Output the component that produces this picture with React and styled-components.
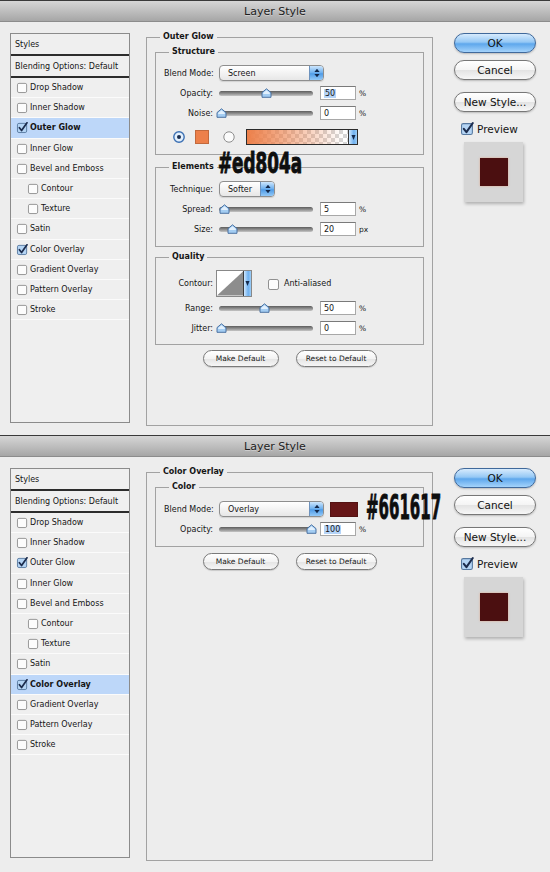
import React from "react";
import styled, { createGlobalStyle } from "styled-components";

const GlobalStyle = createGlobalStyle`
  html, body {
    margin: 0;
    padding: 0;
    background: #ececec;
  }
  body {
    font-family: "DejaVu Sans", Verdana, sans-serif;
    font-size: 8px;
    color: #151515;
  }
`;

const Page = styled.div`
  width: 550px;
  height: 872px;
  overflow: hidden;
`;

const Dialog = styled.section`
  position: relative;
  height: ${(p) => p.$height}px;
  background: #ededed;
`;

const TitleBar = styled.header`
  height: 20px;
  border-top: 1px solid #3a3a3a;
  border-bottom: 1px solid #8c8c8c;
  background: linear-gradient(#d6d6d6, #bcbcbc 55%, #a6a6a6);
  display: flex;
  align-items: center;
  justify-content: center;
  font-size: 11px;
  color: #1d1d1d;
  text-shadow: 0 1px 0 rgba(255, 255, 255, 0.35);
`;

const Body = styled.div`
  display: flex;
  align-items: flex-start;
  padding: 9px 0 0 10px;
`;

/* ---------- left style list ---------- */

const StyleList = styled.div`
  width: 120px;
  height: 390px;
  margin-top: 2px;
  box-sizing: border-box;
  border: 1px solid #8b8b8b;
  background: #efefef;
  flex: none;
`;

const ListHead = styled.div`
  height: 22px;
  box-sizing: border-box;
  display: flex;
  align-items: center;
  padding-left: 4px;
  border-bottom: 2px solid #2c2c2c;
  white-space: nowrap;
`;

const ListItem = styled.div`
  height: 20.2px;
  box-sizing: border-box;
  display: flex;
  align-items: center;
  padding-left: ${(p) => (p.$sub ? 17 : 6)}px;
  border-bottom: 1px solid #fbfbfb;
  background: ${(p) => (p.$active ? "#bdd7f9" : "transparent")};
  font-weight: ${(p) => (p.$active ? "bold" : "normal")};
  white-space: nowrap;
`;

const ItemText = styled.span`
  margin-left: 2px;
`;

/* ---------- group boxes ---------- */

const Main = styled.div`
  width: 287px;
  margin-left: 16px;
  flex: none;
`;

const Group = styled.fieldset`
  margin: ${(p) => p.$mt || 0}px 0 0;
  padding: ${(p) => p.$pad};
  border: 1px solid #a2a2a2;
  box-sizing: border-box;
  height: ${(p) => (p.$height ? `${p.$height}px` : "auto")};
  min-width: 0;
`;

const Legend = styled.legend`
  margin-left: 5px;
  padding: 0 3px;
  font-weight: bold;
  font-size: 8px;
  line-height: 12px;
`;

const Row = styled.div`
  display: flex;
  align-items: center;
  height: ${(p) => p.$h || 20}px;
  margin-top: ${(p) => p.$mt || 0}px;
`;

const Label = styled.span`
  width: 49px;
  margin-right: 6px;
  text-align: right;
  flex: none;
  white-space: nowrap;
`;

/* ---------- controls ---------- */

const Popup = styled.div`
  width: ${(p) => p.$w}px;
  height: 16px;
  box-sizing: border-box;
  flex: none;
  display: flex;
  align-items: center;
  border: 1px solid #8e8e8e;
  border-radius: 4px;
  background: linear-gradient(#ffffff, #f3f3f3 50%, #e7e7e7);
  box-shadow: 0 1px 1px rgba(0, 0, 0, 0.12);
  padding-left: 8px;
  overflow: hidden;
`;

const PopupArrows = styled.span`
  margin-left: auto;
  width: 13px;
  align-self: stretch;
  background: linear-gradient(#cde6fd, #6aaeee 50%, #4f9be6 55%, #93c9f8);
  border-left: 1px solid #6d92bd;
  display: flex;
  align-items: center;
  justify-content: center;
`;

const Track = styled.div`
  position: relative;
  width: 94px;
  height: 5px;
  border-radius: 3px;
  background: linear-gradient(#5d5d5d, #989898 60%, #c6c6c6);
  margin-right: 7px;
  flex: none;
`;

const Thumb = styled.svg`
  position: absolute;
  top: -3px;
  width: 11px;
  height: 10px;
  margin-left: -5.5px;
`;

const Field = styled.div`
  width: 36px;
  height: 14px;
  box-sizing: border-box;
  flex: none;
  border: 1px solid #a8a8a8;
  border-top-color: #7a7a7a;
  background: #fff;
  padding-left: 3px;
  display: flex;
  align-items: center;
`;

const Selection = styled.span`
  background: #b5d4f8;
  padding: 0 1px;
`;

const Unit = styled.span`
  margin-left: 3px;
  font-size: 7.5px;
`;

const Swatch = styled.span`
  width: ${(p) => p.$w}px;
  height: ${(p) => p.$h}px;
  margin-left: ${(p) => p.$ml || 0}px;
  background: ${(p) => p.$color};
  box-shadow: inset 0 0 0 1px rgba(0, 0, 0, 0.18);
  flex: none;
`;

const RadioSvg = styled.svg`
  width: 12px;
  height: 12px;
  flex: none;
  margin-left: ${(p) => p.$ml || 0}px;
`;

const GradientPicker = styled.div`
  width: 112px;
  height: 16px;
  box-sizing: border-box;
  margin-left: 11px;
  display: flex;
  border: 1px solid #2b2b2b;
  flex: none;
`;

const GradientFill = styled.div`
  flex: 1;
  background: linear-gradient(
      to right,
      #ed804a,
      rgba(237, 128, 74, 0.75) 25%,
      rgba(237, 128, 74, 0) 95%
    ),
    repeating-conic-gradient(#d6d6d6 0 25%, #ffffff 0 50%) 0 0 / 8px 8px;
`;

const DropStrip = styled.span`
  width: ${(p) => p.$w}px;
  border-left: 1px solid #3a3a3a;
  background: linear-gradient(to right, #cfe7fd, #6eb0ef 60%, #9ccdf7);
  display: flex;
  align-items: center;
  justify-content: center;
  flex: none;
`;

const ContourBox = styled.div`
  width: 36px;
  height: 27px;
  box-sizing: border-box;
  margin-left: -3px;
  display: flex;
  border: 1px solid #888;
  background: #fff;
  flex: none;
`;

const CheckSvg = styled.svg`
  width: ${(p) => p.$size}px;
  height: ${(p) => p.$size}px;
  flex: none;
  overflow: visible;
  margin-left: ${(p) => p.$ml || 0}px;
`;

const InlineText = styled.span`
  margin-left: ${(p) => p.$ml || 0}px;
  white-space: nowrap;
`;

const ButtonRow = styled.div`
  display: flex;
  justify-content: center;
  gap: 17px;
  margin-top: ${(p) => p.$mt}px;
`;

const PillButton = styled.button`
  width: ${(p) => p.$w}px;
  height: 17px;
  padding: 0;
  border: 1px solid #7a7a7a;
  border-radius: 9px;
  background: linear-gradient(#ffffff, #f3f3f3 50%, #e4e4e4 51%, #f6f6f6);
  box-shadow: 0 1px 1px rgba(0, 0, 0, 0.15);
  font: 7.5px "DejaVu Sans", sans-serif;
  color: #1a1a1a;
`;

/* ---------- right column ---------- */

const Side = styled.div`
  width: 82px;
  margin: 2px 0 0 21px;
  display: flex;
  flex-direction: column;
  flex: none;
`;

const DialogButton = styled.button`
  width: 82px;
  height: 20px;
  margin-top: ${(p) => p.$mt || 0}px;
  padding: 0;
  border-radius: 10px;
  border: 1px solid ${(p) => (p.$primary ? "#40699b" : "#777")};
  background: ${(p) =>
    p.$primary
      ? "linear-gradient(#d7ebfd, #95c8f5 45%, #5ea7ec 55%, #a4d3fb)"
      : "linear-gradient(#ffffff, #f4f4f4 50%, #e3e3e3 51%, #f7f7f7)"};
  box-shadow: 0 1px 2px rgba(0, 0, 0, 0.22);
  font: 10.5px "DejaVu Sans", sans-serif;
  color: #111;
`;

const PreviewToggle = styled.div`
  display: flex;
  align-items: center;
  height: 13px;
  margin-top: 10px;
  padding-left: 7px;
  font-size: 10.5px;
`;

const PreviewFrame = styled.div`
  width: 59px;
  height: 60px;
  margin: 7px 0 0 10px;
  background: #d6d6d6;
  box-shadow: 1px 2px 3px rgba(0, 0, 0, 0.25);
  display: flex;
  align-items: center;
  justify-content: center;
`;

const PreviewSquare = styled.div`
  width: 28px;
  height: 28px;
  background: #4b0f10;
  box-shadow: 0 0 2px rgba(237, 128, 74, 0.5);
`;

/* ---------- annotation ---------- */

const Callout = styled.div`
  position: absolute;
  left: ${(p) => p.$x}px;
  top: ${(p) => p.$y}px;
  font-family: "DejaVu Sans Condensed", "DejaVu Sans", sans-serif;
  font-weight: bold;
  font-size: ${(p) => p.$size}px;
  line-height: 0.75;
  color: #0e0e0e;
  -webkit-text-stroke: 0.9px #0e0e0e;
  transform: scaleX(${(p) => p.$squeeze});
  transform-origin: left top;
  white-space: nowrap;
`;

/* ---------- small drawings ---------- */

const Checkbox = ({ on, size = 12, ml }) => (
  <CheckSvg $size={size} $ml={ml} viewBox="0 0 12 12">
    <rect
      x="0.5"
      y="1.5"
      width="10"
      height="10"
      rx="1.6"
      fill={on ? "#b4d4f4" : "#fcfcfc"}
      stroke={on ? "#56789f" : "#8f8f8f"}
    />
    {on && (
      <path
        d="M2.6 6.3 L5 9.3 L10.9 0.9"
        fill="none"
        stroke="#1c2c4d"
        strokeWidth="1.9"
        strokeLinecap="round"
        strokeLinejoin="round"
      />
    )}
  </CheckSvg>
);

const Radio = ({ on, ml }) => (
  <RadioSvg $ml={ml} viewBox="0 0 12 12">
    <circle
      cx="6"
      cy="6"
      r="5.2"
      fill={on ? "#e3f0fd" : "#fbfbfb"}
      stroke={on ? "#3c70b3" : "#8d8d8d"}
      strokeWidth={on ? 1.4 : 1}
    />
    {on && <circle cx="6" cy="6" r="2" fill="#1b2d4e" />}
  </RadioSvg>
);

const UpDown = () => (
  <svg width="6" height="10" viewBox="0 0 6 10">
    <path d="M3 0.8 L5.6 4 H0.4 Z M3 9.2 L5.6 6 H0.4 Z" fill="#13284a" />
  </svg>
);

const Down = () => (
  <svg width="5" height="7" viewBox="0 0 5 7">
    <path d="M0.5 1 H4.5 L2.5 6 Z" fill="#13284a" />
  </svg>
);

const Slider = ({ value }) => (
  <Track>
    <Thumb style={{ left: `${2 + value * 0.9}px` }} viewBox="0 0 11 10">
      <path
        d="M1 4.6 L5.5 0.8 L10 4.6 V9.3 H1 Z"
        fill="#a4cdf2"
        stroke="#3e679a"
        strokeWidth="0.9"
      />
      <path d="M2.2 5 L5.5 2.2 L8.8 5 V6 H2.2 Z" fill="#e2f0fd" />
    </Thumb>
  </Track>
);

const NumberRow = ({ label, value, pos, unit = "%", selected, mt }) => (
  <Row $mt={mt}>
    <Label>{label}</Label>
    <Slider value={pos} />
    <Field>{selected ? <Selection>{value}</Selection> : value}</Field>
    <Unit>{unit}</Unit>
  </Row>
);

const Select = ({ width, children }) => (
  <Popup $w={width}>
    {children}
    <PopupArrows>
      <UpDown />
    </PopupArrows>
  </Popup>
);

/* ---------- dialog frame ---------- */

const STYLES = [
  { name: "Drop Shadow" },
  { name: "Inner Shadow" },
  { name: "Outer Glow" },
  { name: "Inner Glow" },
  { name: "Bevel and Emboss" },
  { name: "Contour", sub: true },
  { name: "Texture", sub: true },
  { name: "Satin" },
  { name: "Color Overlay" },
  { name: "Gradient Overlay" },
  { name: "Pattern Overlay" },
  { name: "Stroke" },
];

const CHECKED = ["Outer Glow", "Color Overlay"];

const LayerStyle = ({ height, active, children, note }) => (
  <Dialog $height={height}>
    <TitleBar>Layer Style</TitleBar>
    <Body>
      <StyleList>
        <ListHead>Styles</ListHead>
        <ListHead>Blending Options: Default</ListHead>
        {STYLES.map((s) => (
          <ListItem key={s.name} $sub={s.sub} $active={s.name === active}>
            <Checkbox on={CHECKED.includes(s.name)} size={11} />
            <ItemText>{s.name}</ItemText>
          </ListItem>
        ))}
      </StyleList>
      <Main>{children}</Main>
      <Side>
        <DialogButton $primary>OK</DialogButton>
        <DialogButton $mt={7}>Cancel</DialogButton>
        <DialogButton $mt={12}>New Style...</DialogButton>
        <PreviewToggle>
          <Checkbox on size={13} />
          <InlineText $ml={3}>Preview</InlineText>
        </PreviewToggle>
        <PreviewFrame>
          <PreviewSquare />
        </PreviewFrame>
      </Side>
    </Body>
    {note}
  </Dialog>
);

const DefaultButtons = ({ mt }) => (
  <ButtonRow $mt={mt}>
    <PillButton $w={76}>Make Default</PillButton>
    <PillButton $w={81}>Reset to Default</PillButton>
  </ButtonRow>
);

export default function App() {
  return (
    <Page>
      <GlobalStyle />
      <LayerStyle
        height={435}
        active="Outer Glow"
        note={
          <Callout $x={218} $y={153} $size={27.5} $squeeze={0.68}>
            #ed804a
          </Callout>
        }
      >
        <Group $height={395} $pad="3px 8px 0">
          <Legend>Outer Glow</Legend>
          <Group $pad="7px 8px 9px">
            <Legend>Structure</Legend>
            <Row $h={16}>
              <Label>Blend Mode:</Label>
              <Select width={105}>Screen</Select>
            </Row>
            <NumberRow label="Opacity:" value="50" pos={50} selected mt={2} />
            <NumberRow label="Noise:" value="0" pos={0} />
            <Row $h={16} $mt={6}>
              <Radio on ml={9} />
              <Swatch $w={14} $h={14} $ml={10} $color="#ed804a" />
              <Radio ml={14} />
              <GradientPicker>
                <GradientFill />
                <DropStrip $w={8}>
                  <Down />
                </DropStrip>
              </GradientPicker>
            </Row>
          </Group>
          <Group $mt={6} $pad="8px 8px 7px">
            <Legend>Elements</Legend>
            <Row $h={16}>
              <Label>Technique:</Label>
              <Select width={56}>Softer</Select>
            </Row>
            <NumberRow label="Spread:" value="5" pos={4} mt={2} />
            <NumberRow label="Size:" value="20" pos={13} unit="px" />
          </Group>
          <Group $mt={4} $pad="7px 8px 6px">
            <Legend>Quality</Legend>
            <Row $h={27}>
              <Label>Contour:</Label>
              <ContourBox>
                <svg width="27" height="25" viewBox="0 0 27 25">
                  <path d="M0 25 L27 0 V25 Z" fill="#8d8d8d" />
                </svg>
                <DropStrip $w={7}>
                  <Down />
                </DropStrip>
              </ContourBox>
              <Checkbox ml={16} />
              <InlineText $ml={4}>Anti-aliased</InlineText>
            </Row>
            <NumberRow label="Range:" value="50" pos={48} mt={1} />
            <NumberRow label="Jitter:" value="0" pos={0} />
          </Group>
          <DefaultButtons mt={5} />
        </Group>
      </LayerStyle>

      <LayerStyle
        height={437}
        active="Color Overlay"
        note={
          <Callout $x={366} $y={60} $size={34} $squeeze={0.49}>
            #661617
          </Callout>
        }
      >
        <Group $height={395} $pad="3px 8px 0">
          <Legend>Color Overlay</Legend>
          <Group $pad="8px 8px 7px">
            <Legend>Color</Legend>
            <Row $h={16}>
              <Label>Blend Mode:</Label>
              <Select width={105}>Overlay</Select>
              <Swatch $w={28} $h={15} $ml={6} $color="#661617" />
            </Row>
            <NumberRow label="Opacity:" value="100" pos={100} selected mt={2} />
          </Group>
          <DefaultButtons mt={6} />
        </Group>
      </LayerStyle>
    </Page>
  );
}
